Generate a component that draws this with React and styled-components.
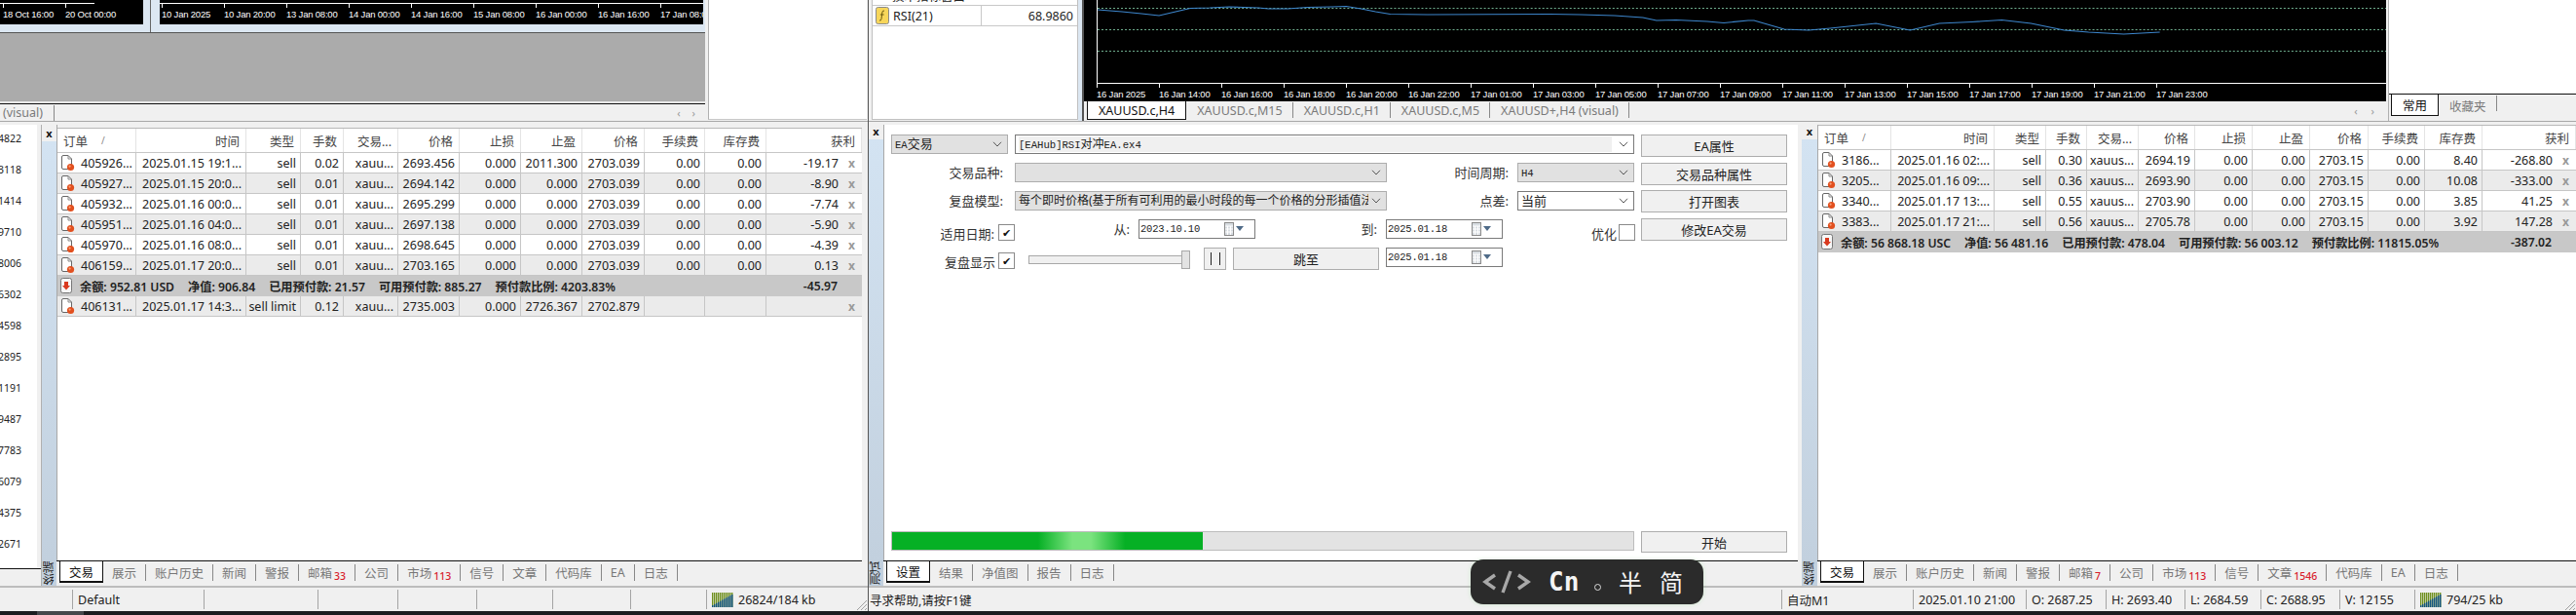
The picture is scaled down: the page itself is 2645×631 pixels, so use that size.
import React from "react";
import styled, { createGlobalStyle } from "styled-components";

const UI_FONT = `"Noto Sans", "Noto Sans CJK SC", sans-serif`;
const MONO_FONT = `"Liberation Mono", "Noto Sans CJK SC", monospace`;
const CHART_FONT = `"Liberation Sans", sans-serif`;

const GlobalStyle = createGlobalStyle`
html, body {
  margin: 0;
  padding: 0;
  background: #f0f0f0;
  overflow: hidden;
}
* { box-sizing: border-box; }
`;

const Page = styled.div`
position: relative;
display: flex;
flex-direction: column;
width: 2645px;
height: 631px;
overflow: hidden;
font-family: ${UI_FONT};
font-size: 12.5px;
color: #222;
background: #f0f0f0;
`;

const Desk = styled.div`
display: flex;
height: 627px;
`;

const Taskbar = styled.div`
display: flex;
height: 4px;
padding-left: 38px;
background: #1b1d20;
`;

const TaskbarItem = styled.div`
width: 48px;
background: #45484c;
`;

const Window = styled.div`
display: flex;
flex-direction: column;
width: ${(p) => p.$w}px;
flex: none;
`;

const WindowDivider = styled.div`
width: 1px;
flex: none;
background: #555;
`;

const TopArea = styled.div`
display: flex;
height: 124px;
flex: none;
`;

const BottomArea = styled.div`
display: flex;
height: 477px;
flex: none;
padding-top: 3px;
border-top: 1px solid #a8a8a8;
`;

/* --- charts --- */
const ChartsColumn = styled.div`
display: flex;
flex-direction: column;
width: 724px;
flex: none;
`;

const ChartsRow = styled.div`
display: flex;
height: 34px;
flex: none;
padding-right: 2px;
background: #dce7f2;
border-bottom: 1px solid #555;
`;

const MiniChart = styled.div`
display: flex;
flex-direction: column;
height: 25px;
width: ${(p) => p.$w}px;
flex: none;
overflow: hidden;
background: #000;
color: #fff;
font-family: ${CHART_FONT};
font-size: 9.5px;
letter-spacing: -0.2px;
line-height: 12px;
`;

const ChartGap = styled.div`
width: 17px;
flex: none;
background: linear-gradient(90deg, #dce7f2 7px, #666 7px, #666 8px, #dce7f2 8px);
`;

const TopAxis = styled.div`
display: flex;
height: 4px;
flex: none;
`;

const AxisLine = styled.div`
width: ${(p) => p.$w};
height: 1px;
margin-top: 3px;
background: #fff;
flex: none;
`;

const TickRow = styled.div`
display: flex;
flex: none;
padding-left: ${(p) => p.$pad || 0}px;
`;

const Tick = styled.div`
flex: 0 0 64px;
white-space: nowrap;
&::before {
  content: "";
  display: block;
  width: 1px;
  height: 4px;
  margin-bottom: 1px;
  background: #fff;
}
`;

const Hatch = styled.div`
height: 70px;
flex: none;
background: #ababab;
`;

const GrayEdge = styled.div`
height: 2px;
flex: none;
background: #e8e8e8;
`;

const MainChart = styled.div`
display: flex;
height: 103px;
flex: none;
padding-left: 13px;
background: #000;
color: #fff;
font-family: ${CHART_FONT};
font-size: 9.5px;
letter-spacing: -0.2px;
line-height: 12px;
overflow: hidden;
`;

const Plot = styled.div`
display: flex;
flex-direction: column;
width: 100%;
`;

const PlotSvg = styled.svg`
display: block;
width: 100%;
height: 85px;
flex: none;
border-left: 1px solid #fff;
`;

const AxisBottom = styled.div`
border-top: 1px solid #fff;
`;

/* --- chart tabs --- */
const ChartTabBar = styled.div`
display: flex;
align-items: center;
flex: none;
height: ${(p) => p.$h}px;
padding-left: ${(p) => p.$pad || 0}px;
border-top: 1px solid #111;
background: #f0f0f0;
font-size: 12.5px;
`;

const ChartTab = styled.div`
display: flex;
align-items: center;
height: 100%;
padding: ${(p) => p.$padding || "0 11px"};
color: ${(p) => (p.$active ? "#111" : "#7a7a7a")};
background: ${(p) => (p.$active ? "#fff" : "transparent")};
border: ${(p) => (p.$active ? "1px solid #111" : "none")};
border-top: none;
position: relative;
white-space: nowrap;
${(p) => !p.$active && `
  &::after {
    content: "";
    position: absolute;
    right: 0;
    top: 1px;
    height: 16px;
    width: 1px;
    background: #888;
  }
`}
`;

const Spacer = styled.div`
flex: 1;
`;

const ScrollArrow = styled.span`
color: #999;
font-size: 11px;
margin-right: ${(p) => p.$gap}px;
`;

/* --- side panels --- */
const WhitePanel = styled.div`
width: ${(p) => p.$w}px;
flex: none;
height: ${(p) => p.$h}px;
background: #fff;
border-left: 1px solid #b0b0b0;
border-bottom: 1px solid #c8c8c8;
margin-left: ${(p) => p.$ml || 0}px;
`;

const Navigator = styled.div`
display: flex;
flex-direction: column;
width: 212px;
flex: none;
height: 123px;
margin-left: 3px;
background: #fff;
border: 1px solid #c0c0c0;
border-top: none;
`;

const NavCaption = styled.div`
display: flex;
align-items: flex-end;
height: 6px;
flex: none;
overflow: hidden;
padding-left: 20px;
border-bottom: 1px solid #c8c8c8;
line-height: 16px;
white-space: nowrap;
`;

const NavRow = styled.div`
display: flex;
align-items: center;
height: 21px;
flex: none;
border-bottom: 1px solid #c8c8c8;
font-size: 12.5px;
`;

const NavName = styled.div`
display: flex;
align-items: center;
gap: 4px;
width: 112px;
height: 100%;
padding-left: 3px;
border-right: 1px solid #c8c8c8;
`;

const NavValue = styled.div`
flex: 1;
text-align: right;
padding-right: 4px;
`;

const ChartBlueGap = styled.div`
width: 4px;
flex: none;
background: #dce7f2;
`;

const ChartColumn = styled.div`
display: flex;
flex-direction: column;
width: 1339px;
flex: none;
border-left: 2px solid #555;
`;

const MarketPanel = styled.div`
display: flex;
flex-direction: column;
flex: 1;
margin-left: 2px;
border-left: 1px solid #b0b0b0;
`;

const MarketWhite = styled.div`
height: 96px;
flex: none;
background: #fff;
`;

/* --- dock panels --- */
const Sliver = styled.div`
display: flex;
flex-direction: column;
width: 43px;
flex: none;
border-right: 1px solid #b0b0b0;
`;

const SliverScale = styled.div`
display: flex;
flex-direction: column;
flex: 1;
width: 38px;
padding-top: 7px;
background: #fff;
font-size: 10.5px;
`;

const SliverValue = styled.div`
display: flex;
justify-content: flex-end;
width: 22px;
height: 32px;
flex: none;
overflow: hidden;
line-height: 14px;
`;

const SliverFoot = styled.div`
height: 26px;
flex: none;
border-top: 1px solid #111;
`;

const Dock = styled.div`
display: flex;
width: ${(p) => p.$w}px;
flex: none;
margin-left: ${(p) => p.$ml || 0}px;
`;

const Strip = styled.div`
display: flex;
flex-direction: column;
align-items: center;
width: ${(p) => p.$w}px;
flex: none;
padding-top: ${(p) => p.$top}px;
`;

const StripClose = styled.div`
height: 14px;
flex: none;
font-weight: 700;
font-size: 11px;
line-height: 11px;
color: #111;
`;

const StripBody = styled.div`
flex: 1;
width: 100%;
background: linear-gradient(180deg, #d3e3f2, #c2d0de);
`;

const StripLabel = styled.div`
display: flex;
justify-content: center;
align-items: center;
width: 100%;
height: 26px;
flex: none;
background: #c2d0de;
writing-mode: vertical-rl;
transform: rotate(180deg);
font-size: 12px;
line-height: 13px;
color: #222;
`;

const DockMain = styled.div`
display: flex;
flex-direction: column;
flex: 1;
min-width: 0;
`;

const DockBody = styled.div`
flex: 1;
min-height: 0;
display: flex;
flex-direction: column;
background: #fff;
border-left: 1px solid #a8a8a8;
`;

const BodyCap = styled.div`
height: ${(p) => p.$h}px;
flex: none;
background: #f0f0f0;
`;

const TabRow = styled.div`
display: flex;
height: 26px;
flex: none;
padding-left: 3px;
border-top: 1px solid #111;
background: #f0f0f0;
font-size: 12.5px;
`;

const DockTab = styled.div`
display: flex;
align-items: center;
white-space: nowrap;
${(p) => p.$active ? `
  height: 22px;
  padding: 0 9px;
  background: #fff;
  color: #111;
  border: 1px solid #111;
  border-top: none;
  border-bottom-width: 2px;
` : `
  height: 17px;
  margin-top: 3px;
  padding: 0 9px;
  color: #777;
  border-right: 1px solid #888;
`}
`;

const TabBadge = styled.span`
align-self: flex-end;
margin-left: 2px;
color: #d8202c;
font-size: 10.5px;
font-weight: 500;
line-height: 10px;
`;

/* --- table --- */
const GridRow = styled.div`
display: grid;
grid-template-columns: ${(p) => p.$cols};
flex: none;
height: 21px;
background: ${(p) => (p.$shade ? "#ebebeb" : "#fff")};
border-bottom: 1px solid #c6c6c6;
`;

const HeadRow = styled(GridRow)`
height: 26px;
border-top: 1px solid #b8b8b8;
background: #fff;
`;

const HeadCell = styled.div`
display: flex;
align-items: center;
justify-content: ${(p) => (p.$left ? "flex-start" : "flex-end")};
gap: 14px;
padding: 0 6px;
border-right: 1px solid #e4e4e4;
white-space: nowrap;
color: #444;
overflow: hidden;
`;

const SortMark = styled.span`
color: #888;
font-size: 10px;
`;

const Cell = styled.div`
display: flex;
align-items: center;
justify-content: flex-end;
padding-right: 4px;
border-right: 1px solid #c6c6c6;
white-space: nowrap;
overflow: hidden;
`;

const OrderCell = styled(Cell)`
justify-content: flex-start;
gap: 6px;
padding: 0 0 0 3px;
`;

const ProfitCell = styled(Cell)`
justify-content: flex-end;
gap: 8px;
padding-right: 5px;
border-right: none;
`;

const CloseMark = styled.span`
width: 11px;
text-align: center;
color: #999;
font-weight: 700;
font-size: 12px;
`;

const SummaryRow = styled.div`
display: flex;
align-items: center;
flex: none;
height: 21px;
padding: 0 25px 0 3px;
gap: 7px;
background: #c8c8c8;
font-size: 12.2px;
font-weight: 600;
white-space: nowrap;
`;

const SummaryParts = styled.div`
display: flex;
flex: 1;
gap: ${(p) => p.$gap}px;
`;

/* --- tester form --- */
const TesterTop = styled.div`
display: flex;
gap: 7px;
padding: 10px 0 0 7px;
font-size: 13px;
`;

const TesterForm = styled.div`
display: flex;
flex-direction: column;
width: 763px;
flex: none;
`;

const FormRow = styled.div`
display: flex;
height: ${(p) => p.$h}px;
flex: none;
margin-bottom: ${(p) => p.$mb}px;
`;

const FormLabel = styled.div`
width: ${(p) => p.$w}px;
flex: none;
padding-right: ${(p) => p.$pr}px;
padding-top: ${(p) => p.$pt || 0}px;
text-align: right;
line-height: 20px;
white-space: nowrap;
color: #333;
`;

const Combo = styled.div`
display: flex;
align-items: center;
width: ${(p) => p.$w}px;
flex: none;
height: 20px;
margin-left: ${(p) => p.$ml || 0}px;
padding: 0 0 0 3px;
overflow: hidden;
white-space: nowrap;
background: ${(p) => (p.$plain ? "#fff" : "#e1e1e1")};
border: 1px solid ${(p) => (p.$plain ? "#7a7a7a" : "#adadad")};
font-size: ${(p) => p.$size || 13}px;
color: #222;
`;

const ComboText = styled.div`
flex: 1;
min-width: 0;
overflow: hidden;
line-height: 16px;
${(p) => p.$edit && "background: #f0f0f0; height: 16px; margin-right: 4px;"}
`;

const ComboArrow = styled.svg`
width: 10px;
height: 6px;
flex: none;
margin: 0 5px 0 3px;
`;

const Mono = styled.span`
font-family: ${MONO_FONT};
font-size: 10.6px;
`;

const CheckBox = styled.div`
display: flex;
align-items: center;
justify-content: center;
width: 17px;
height: 17px;
flex: none;
margin-top: 5px;
background: #fff;
border: 1px solid #8a8a8a;
color: #111;
font-size: 11px;
line-height: 11px;
`;

const DateBox = styled.div`
display: flex;
align-items: center;
width: 120px;
height: 20px;
flex: none;
padding: 0 0 0 1px;
background: #fff;
border: 1px solid #7a7a7a;
font-family: ${MONO_FONT};
font-size: 10.5px;
`;

const DateValue = styled.div`
flex: 1;
letter-spacing: -0.2px;
`;

const SliderWrap = styled.div`
display: flex;
align-items: center;
width: 166px;
flex: none;
margin: 3px 14px 0 14px;
height: 19px;
`;

const SliderTrack = styled.div`
flex: 1;
height: 9px;
background: #f0f0f0;
border: 1px solid #a8a8a8;
`;

const SliderThumb = styled.div`
width: 9px;
height: 19px;
flex: none;
margin-left: -2px;
background: #e3e3e3;
border: 1px solid #a8a8a8;
`;

const PlainButton = styled.div`
display: flex;
align-items: center;
justify-content: center;
width: ${(p) => p.$w}px;
height: ${(p) => p.$h}px;
flex: none;
margin-right: ${(p) => p.$mr || 0}px;
margin-bottom: ${(p) => p.$mb || 0}px;
background: #f0f0f0;
border: 1px solid #adadad;
font-size: 13px;
color: #222;
`;

const ButtonColumn = styled.div`
display: flex;
flex-direction: column;
width: 150px;
flex: none;
`;

const TesterFoot = styled.div`
display: flex;
align-items: flex-start;
gap: 7px;
margin-top: auto;
padding: 0 0 8px 7px;
`;

const Progress = styled.div`
width: 763px;
height: 20px;
flex: none;
background: #e3e3e3;
border: 1px solid #bcbcbc;
`;

const ProgressFill = styled.div`
height: 100%;
width: ${(p) => p.$w}px;
background: linear-gradient(90deg, #06b025 0%, #06b025 47%, #7be37f 58%, #7be37f 64%, #06b025 75%, #06b025 100%);
`;

/* --- status bar --- */
const StatusBar = styled.div`
display: flex;
align-items: center;
height: 26px;
flex: none;
background: #f0f0f0;
border-top: 2px solid #bdbdbd;
font-size: 12.5px;
color: #222;
`;

const StatusCell = styled.div`
display: flex;
align-items: center;
gap: 4px;
width: ${(p) => p.$w}px;
flex: none;
height: 20px;
padding-left: ${(p) => (p.$pad === undefined ? 5 : p.$pad)}px;
border-right: ${(p) => (p.$noSep ? "none" : "1px solid #a4a4a4")};
white-space: nowrap;
overflow: hidden;
`;

const Grip = styled.svg`
width: 12px;
height: 14px;
flex: none;
margin-left: auto;
align-self: flex-end;
`;

/* --- input method tip, floats over the page --- */
const ImeBar = styled.div`
position: absolute;
left: 1510px;
top: 574px;
display: flex;
align-items: center;
width: 239px;
height: 46px;
padding-left: 12px;
background: #2b2b2b;
border-radius: 13px;
box-shadow: 0 0 4px rgba(140, 220, 140, 0.35);
color: #f4f4f4;
`;

const ImeCode = styled.svg`
width: 50px;
height: 28px;
flex: none;
margin-right: 18px;
`;

const ImeCn = styled.div`
font-family: "DejaVu Sans Mono", monospace;
font-weight: 700;
font-size: 26px;
line-height: 28px;
width: 47px;
flex: none;
`;

const ImeGlyph = styled.div`
font-family: "Noto Sans CJK SC", sans-serif;
font-size: 24px;
line-height: 28px;
width: ${(p) => p.$w}px;
flex: none;
`;

const ImeDot = styled.div`
width: 7px;
height: 7px;
flex: none;
margin: 10px 18px 0 0;
border: 1px solid #ddd;
border-radius: 50%;
`;

/* --- small drawings --- */
const OrderIcon = () => (
  <svg width="15" height="17" viewBox="0 0 15 17" style={{ flex: "none" }}>
    <path d="M1.5 2 Q1.5 .5 3 .5 H8 L11.5 4 V14.5 H3 Q1.5 14.5 1.5 13 Z" fill="#fff" stroke="#666" />
    <path d="M8 .5 V4 H11.5" fill="none" stroke="#888" />
    <circle cx="10.5" cy="12.5" r="3.6" fill="#e2501f" />
    <circle cx="9.6" cy="11.6" r="1.1" fill="#f6a37c" />
  </svg>
);

const BalanceIcon = () => (
  <svg width="13" height="17" viewBox="0 0 13 17" style={{ flex: "none" }}>
    <rect x=".5" y=".5" width="11" height="15" rx="2" fill="#f6f6f6" stroke="#777" />
    <path d="M4 4 H8 V8 H10 L6 12.5 L2 8 H4 Z" fill="#d9391e" />
  </svg>
);

const FormulaIcon = () => (
  <svg width="14" height="18" viewBox="0 0 14 18">
    <rect x=".5" y=".5" width="13" height="17" rx="2" fill="#f7d65a" stroke="#8a8a8a" />
    <path d="M9 4 Q7 3.6 6.8 6 L6 12.5 Q5.7 14.4 4 14 M4.8 8 H8.6" fill="none" stroke="#6a5a10" />
  </svg>
);

const Chevron = () => (
  <ComboArrow viewBox="0 0 10 6">
    <path d="M1 .8 L5 5 L9 .8" fill="none" stroke="#555" />
  </ComboArrow>
);

const CalendarIcon = () => (
  <svg width="22" height="14" viewBox="0 0 22 14" style={{ marginRight: 9, flex: "none" }}>
    <rect x=".5" y=".5" width="9" height="13" fill="#d8dde2" stroke="#8a8a8a" />
    <path d="M1 4 H9 M1 7 H9 M1 10 H9 M3.5 4 V13 M6.5 4 V13" stroke="#fff" />
    <path d="M12 4 H20 L16 9 Z" fill="#4f6b88" />
  </svg>
);

const GripMark = () => (
  <Grip viewBox="0 0 12 14">
    <path d="M11 3 L1 13 M11 7 L5 13 M11 11 L9 13" stroke="#a0a0a0" fill="none" />
  </Grip>
);

const MemoryIcon = () => (
  <svg width="23" height="15" viewBox="0 0 23 15" style={{ flex: "none" }}>
    {Array.from({ length: 11 }, (_, i) => (
      <g key={i}>
        <rect x={i * 2} y="0" width="1.4" height="15" fill="#6f8f1e" />
        <rect x={i * 2} y={13 - i * 1.1} width="1.4" height={2 + i * 1.1} fill="#14557f" />
      </g>
    ))}
  </svg>
);

const PauseIcon = () => (
  <svg width="14" height="13" viewBox="0 0 14 13">
    <path d="M2.5 0 V13 M11.5 0 V13" stroke="#222" />
  </svg>
);

/* --- data --- */
const TERMINAL_TABS = [
  { label: "交易", active: true },
  { label: "展示" },
  { label: "账户历史" },
  { label: "新闻" },
  { label: "警报" },
  { label: "邮箱", badge: "33" },
  { label: "公司" },
  { label: "市场", badge: "113" },
  { label: "信号" },
  { label: "文章" },
  { label: "代码库" },
  { label: "EA" },
  { label: "日志" },
];

const TERMINAL_TABS_RIGHT = TERMINAL_TABS.map((t) => {
  if (t.label === "邮箱") return { ...t, badge: "7" };
  if (t.label === "文章") return { ...t, badge: "1546" };
  return t;
});

const TESTER_TABS = [
  { label: "设置", active: true },
  { label: "结果" },
  { label: "净值图" },
  { label: "报告" },
  { label: "日志" },
];

const HEADERS = ["订单", "时间", "类型", "手数", "交易...", "价格", "止损", "止盈", "价格", "手续费", "库存费", "获利"];

const LEFT_COLS = "81px 113px 56px 44px 56px 63px 63px 63px 64px 62px 63px 1fr";
const RIGHT_COLS = "75px 106px 53px 42px 53px 58px 59px 59px 60px 58px 59px 1fr";

const leftRow = (id, time, open, profit) => [id, time, "sell", open[0], "xauu...", open[1], "0.000", open[2] || "0.000", "2703.039", "0.00", "0.00", profit];

const LEFT_ROWS = [
  leftRow("405926...", "2025.01.15 19:1...", ["0.02", "2693.456", "2011.300"], "-19.17"),
  leftRow("405927...", "2025.01.15 20:0...", ["0.01", "2694.142"], "-8.90"),
  leftRow("405932...", "2025.01.16 00:0...", ["0.01", "2695.299"], "-7.74"),
  leftRow("405951...", "2025.01.16 04:0...", ["0.01", "2697.138"], "-5.90"),
  leftRow("405970...", "2025.01.16 08:0...", ["0.01", "2698.645"], "-4.39"),
  leftRow("406159...", "2025.01.17 20:0...", ["0.01", "2703.165"], "0.13"),
];

const LEFT_PENDING = ["406131...", "2025.01.17 14:3...", "sell limit", "0.12", "xauu...", "2735.003", "0.000", "2726.367", "2702.879", "", "", ""];

const rightRow = (id, time, lots, price, swap, profit) => [id, time, "sell", lots, "xauus...", price, "0.00", "0.00", "2703.15", "0.00", swap, profit];

const RIGHT_ROWS = [
  rightRow("3186...", "2025.01.16 02:...", "0.30", "2694.19", "8.40", "-268.80"),
  rightRow("3205...", "2025.01.16 09:...", "0.36", "2693.90", "10.08", "-333.00"),
  rightRow("3340...", "2025.01.17 13:...", "0.55", "2703.90", "3.85", "41.25"),
  rightRow("3383...", "2025.01.17 21:...", "0.56", "2705.78", "3.92", "147.28"),
];

const SCALE = ["64822", "63118", "61414", "59710", "58006", "56302", "54598", "52895", "51191", "49487", "47783", "46079", "44375", "42671"];

const MINI_TICKS = ["10 Jan 2025", "10 Jan 20:00", "13 Jan 08:00", "14 Jan 00:00", "14 Jan 16:00", "15 Jan 08:00", "16 Jan 00:00", "16 Jan 16:00", "17 Jan 08:00"];

const MAIN_TICKS = ["16 Jan 2025", "16 Jan 14:00", "16 Jan 16:00", "16 Jan 18:00", "16 Jan 20:00", "16 Jan 22:00", "17 Jan 01:00", "17 Jan 03:00", "17 Jan 05:00", "17 Jan 07:00", "17 Jan 09:00", "17 Jan 11:00", "17 Jan 13:00", "17 Jan 15:00", "17 Jan 17:00", "17 Jan 19:00", "17 Jan 21:00", "17 Jan 23:00"];

const RSI_POINTS = "1125,10 1150,12 1170,14 1188,16 1205,12 1220,8.5 1240,8 1260,7 1290,8 1300,9 1320,9 1340,7.5 1365,7 1380,6.5 1395,9 1410,12 1425,14.5 1463,15 1589,14.5 1620,15 1655,16 1684,18 1698,21 1718,20.5 1750,22 1767,23.5 1792,21 1798,21 1829,30 1854,31 1876,29 1923,24 1958,31 1988,24 2021,22.5 2052,20.5 2082,24 2116,31 2141,33 2177,35 2214,33";

/* --- shared parts --- */
const DockTabs = ({ tabs }) => (
  <TabRow>
    {tabs.map((t) => (
      <DockTab key={t.label} $active={t.active}>
        {t.label}
        {t.badge && <TabBadge>{t.badge}</TabBadge>}
      </DockTab>
    ))}
  </TabRow>
);

const TradeRow = ({ cols, values, shade }) => (
  <GridRow $cols={cols} $shade={shade}>
    <OrderCell>
      <OrderIcon />
      {values[0]}
    </OrderCell>
    {values.slice(1, 11).map((v, i) => (
      <Cell key={i}>{v}</Cell>
    ))}
    <ProfitCell>
      {values[11]}
      <CloseMark>x</CloseMark>
    </ProfitCell>
  </GridRow>
);

const TradeHeader = ({ cols }) => (
  <HeadRow $cols={cols}>
    {HEADERS.map((h, i) => (
      <HeadCell key={i} $left={i === 0}>
        {h}
        {i === 0 && <SortMark>/</SortMark>}
      </HeadCell>
    ))}
  </HeadRow>
);

const Summary = ({ parts, total, gap }) => (
  <SummaryRow>
    <BalanceIcon />
    <SummaryParts $gap={gap}>
      {parts.map((p) => (
        <span key={p}>{p}</span>
      ))}
    </SummaryParts>
    {total}
  </SummaryRow>
);

const MainChartBlock = () => (
  <MainChart>
    <Plot>
      <PlotSvg viewBox="1125 0 1321 85" preserveAspectRatio="none">
        {[8.5, 30.5, 52.5].map((y) => (
          <line key={y} x1="1125" x2="2446" y1={y} y2={y} stroke="#6fae8e" strokeDasharray="2 2" />
        ))}
        <polyline points={RSI_POINTS} fill="none" stroke="#3d86cc" strokeWidth="1.2" />
      </PlotSvg>
      <AxisBottom>
        <TickRow>
          {MAIN_TICKS.map((t) => (
            <Tick key={t}>{t}</Tick>
          ))}
        </TickRow>
      </AxisBottom>
    </Plot>
  </MainChart>
);

const TesterPanel = () => (
  <>
    <TesterTop>
      <TesterForm>
        <FormRow $h={20} $mb={9}>
          <Combo $w={120}>
            <ComboText><Mono>EA</Mono>交易</ComboText>
            <Chevron />
          </Combo>
          <Combo $w={636} $ml={7} $plain $size={12}>
            <ComboText $edit><Mono>[EAHub]RSI</Mono>对冲<Mono>EA.ex4</Mono></ComboText>
            <Chevron />
          </Combo>
        </FormRow>
        <FormRow $h={20} $mb={9}>
          <FormLabel $w={127} $pr={12}>交易品种:</FormLabel>
          <Combo $w={382}>
            <ComboText />
            <Chevron />
          </Combo>
          <FormLabel $w={134} $pr={9}>时间周期:</FormLabel>
          <Combo $w={120}>
            <ComboText><Mono>H4</Mono></ComboText>
            <Chevron />
          </Combo>
        </FormRow>
        <FormRow $h={20} $mb={9}>
          <FormLabel $w={127} $pr={12}>复盘模型:</FormLabel>
          <Combo $w={382} $size={12}>
            <ComboText>每个即时价格(基于所有可利用的最小时段的每一个价格的分形插值法,最精确)</ComboText>
            <Chevron />
          </Combo>
          <FormLabel $w={134} $pr={9}>点差:</FormLabel>
          <Combo $w={120} $plain>
            <ComboText>当前</ComboText>
            <Chevron />
          </Combo>
        </FormRow>
        <FormRow $h={22} $mb={7}>
          <FormLabel $w={110} $pr={4} $pt={5}>适用日期:</FormLabel>
          <CheckBox>✔</CheckBox>
          <FormLabel $w={127} $pr={9}>从:</FormLabel>
          <DateBox>
            <DateValue>2023.10.10</DateValue>
            <CalendarIcon />
          </DateBox>
          <FormLabel $w={134} $pr={9}>到:</FormLabel>
          <DateBox>
            <DateValue>2025.01.18</DateValue>
            <CalendarIcon />
          </DateBox>
          <FormLabel $w={119} $pr={2} $pt={5}>优化</FormLabel>
          <CheckBox />
        </FormRow>
        <FormRow $h={23} $mb={0}>
          <FormLabel $w={110} $pr={3} $pt={5}>复盘显示</FormLabel>
          <CheckBox>✔</CheckBox>
          <SliderWrap>
            <SliderTrack />
            <SliderThumb />
          </SliderWrap>
          <PlainButton $w={23} $h={23} $mr={7}><PauseIcon /></PlainButton>
          <PlainButton $w={150} $h={23} $mr={7}>跳至</PlainButton>
          <DateBox>
            <DateValue>2025.01.18</DateValue>
            <CalendarIcon />
          </DateBox>
        </FormRow>
      </TesterForm>
      <ButtonColumn>
        <PlainButton $w={150} $h={23} $mb={6}>EA属性</PlainButton>
        <PlainButton $w={150} $h={23} $mb={5}>交易品种属性</PlainButton>
        <PlainButton $w={150} $h={23} $mb={6}>打开图表</PlainButton>
        <PlainButton $w={150} $h={23}>修改EA交易</PlainButton>
      </ButtonColumn>
    </TesterTop>
    <TesterFoot>
      <Progress>
        <ProgressFill $w={319} />
      </Progress>
      <PlainButton $w={150} $h={22}>开始</PlainButton>
    </TesterFoot>
  </>
);

const App = () => (
  <Page>
    <GlobalStyle />
    <Desk>
      <Window $w={891}>
        <TopArea>
          <ChartsColumn>
            <ChartsRow>
              <MiniChart $w={147}>
                <TopAxis>
                  <AxisLine $w="97px" />
                </TopAxis>
                <TickRow $pad={3}>
                  <Tick>18 Oct 16:00</Tick>
                  <Tick>20 Oct 00:00</Tick>
                </TickRow>
              </MiniChart>
              <ChartGap />
              <MiniChart $w={558}>
                <TopAxis>
                  <AxisLine $w="100%" />
                </TopAxis>
                <TickRow $pad={2}>
                  {MINI_TICKS.map((t) => (
                    <Tick key={t}>{t}</Tick>
                  ))}
                </TickRow>
              </MiniChart>
            </ChartsRow>
            <Hatch />
            <GrayEdge />
            <ChartTabBar $h={18}>
              <ChartTab $padding="0 12px 0 3px">(visual)</ChartTab>
              <Spacer />
              <ScrollArrow $gap={12}>‹</ScrollArrow>
              <ScrollArrow $gap={10}>›</ScrollArrow>
            </ChartTabBar>
          </ChartsColumn>
          <WhitePanel $w={163} $h={123} $ml={3} />
        </TopArea>
        <BottomArea>
          <Sliver>
            <SliverScale>
              {SCALE.map((v) => (
                <SliverValue key={v}>{v}</SliverValue>
              ))}
            </SliverScale>
            <SliverFoot />
          </Sliver>
          <Dock $w={842}>
            <Strip $w={15} $top={3}>
              <StripClose>x</StripClose>
              <StripBody />
              <StripLabel>终端</StripLabel>
            </Strip>
            <DockMain>
              <DockBody>
                <BodyCap $h={3} />
                <TradeHeader cols={LEFT_COLS} />
                {LEFT_ROWS.map((r, i) => (
                  <TradeRow key={r[0]} cols={LEFT_COLS} values={r} shade={i % 2 === 1} />
                ))}
                <Summary
                  gap={14}
                  total="-45.97"
                  parts={["余额: 952.81 USD", "净值: 906.84", "已用预付款: 21.57", "可用预付款: 885.27", "预付款比例: 4203.83%"]}
                />
                <TradeRow cols={LEFT_COLS} values={LEFT_PENDING} shade />
              </DockBody>
              <DockTabs tabs={TERMINAL_TABS} />
            </DockMain>
          </Dock>
        </BottomArea>
        <StatusBar>
          <StatusCell $w={75} />
          <StatusCell $w={135}>Default</StatusCell>
          <StatusCell $w={117} />
          <StatusCell $w={82} />
          <StatusCell $w={81} />
          <StatusCell $w={78} />
          <StatusCell $w={80} />
          <StatusCell $w={78} />
          <StatusCell $w={150} $noSep>
            <MemoryIcon />
            26824/184 kb
          </StatusCell>
          <GripMark />
        </StatusBar>
      </Window>
      <WindowDivider />
      <Window $w={1753}>
        <TopArea>
          <Navigator>
            <NavCaption>技术指标窗口</NavCaption>
            <NavRow>
              <NavName>
                <FormulaIcon />
                RSI(21)
              </NavName>
              <NavValue>68.9860</NavValue>
            </NavRow>
          </Navigator>
          <ChartBlueGap />
          <ChartColumn>
            <MainChartBlock />
            <ChartTabBar $h={20} $pad={3}>
              <ChartTab $active>XAUUSD.c,H4</ChartTab>
              <ChartTab>XAUUSD.c,M15</ChartTab>
              <ChartTab>XAUUSD.c,H1</ChartTab>
              <ChartTab>XAUUSD.c,M5</ChartTab>
              <ChartTab>XAUUSD+,H4 (visual)</ChartTab>
              <Spacer />
              <ScrollArrow $gap={14}>‹</ScrollArrow>
              <ScrollArrow $gap={12}>›</ScrollArrow>
            </ChartTabBar>
          </ChartColumn>
          <MarketPanel>
            <MarketWhite />
            <ChartTabBar $h={23} $pad={2}>
              <ChartTab $active>常用</ChartTab>
              <ChartTab>收藏夹</ChartTab>
            </ChartTabBar>
          </MarketPanel>
        </TopArea>
        <BottomArea>
          <Dock $w={954}>
            <Strip $w={15} $top={1}>
              <StripClose>x</StripClose>
              <StripBody />
              <StripLabel>测试</StripLabel>
            </Strip>
            <DockMain>
              <DockBody>
                <TesterPanel />
              </DockBody>
              <DockTabs tabs={TESTER_TABS} />
            </DockMain>
          </Dock>
          <Dock $w={795} $ml={4}>
            <Strip $w={16} $top={1}>
              <StripClose>x</StripClose>
              <StripBody />
              <StripLabel>终端</StripLabel>
            </Strip>
            <DockMain>
              <DockBody>
                <TradeHeader cols={RIGHT_COLS} />
                {RIGHT_ROWS.map((r, i) => (
                  <TradeRow key={r[0]} cols={RIGHT_COLS} values={r} shade={i % 2 === 1} />
                ))}
                <Summary
                  gap={14}
                  total="-387.02"
                  parts={["余额: 56 868.18 USC", "净值: 56 481.16", "已用预付款: 478.04", "可用预付款: 56 003.12", "预付款比例: 11815.05%"]}
                />
              </DockBody>
              <DockTabs tabs={TERMINAL_TABS_RIGHT} />
            </DockMain>
          </Dock>
        </BottomArea>
        <StatusBar>
          <StatusCell $w={938} $pad={1}>寻求帮助,请按F1键</StatusCell>
          <StatusCell $w={135}>自动M1</StatusCell>
          <StatusCell $w={116}>2025.01.10 21:00</StatusCell>
          <StatusCell $w={82}>O: 2687.25</StatusCell>
          <StatusCell $w={81}>H: 2693.40</StatusCell>
          <StatusCell $w={78}>L: 2684.59</StatusCell>
          <StatusCell $w={81}>C: 2688.95</StatusCell>
          <StatusCell $w={77}>V: 12155</StatusCell>
          <StatusCell $w={130} $noSep>
            <MemoryIcon />
            794/25 kb
          </StatusCell>
          <GripMark />
        </StatusBar>
      </Window>
    </Desk>
    <Taskbar>
      <TaskbarItem />
    </Taskbar>
    <ImeBar>
      <ImeCode viewBox="0 0 50 28">
        <path d="M13 7 L3 14 L13 21 M37 7 L47 14 L37 21 M29 3 L21 25" fill="none" stroke="#a8a8a8" strokeWidth="3.4" />
      </ImeCode>
      <ImeCn>Cn</ImeCn>
      <ImeDot />
      <ImeGlyph $w={42}>半</ImeGlyph>
      <ImeGlyph $w={26}>简</ImeGlyph>
    </ImeBar>
  </Page>
);

export default App;
